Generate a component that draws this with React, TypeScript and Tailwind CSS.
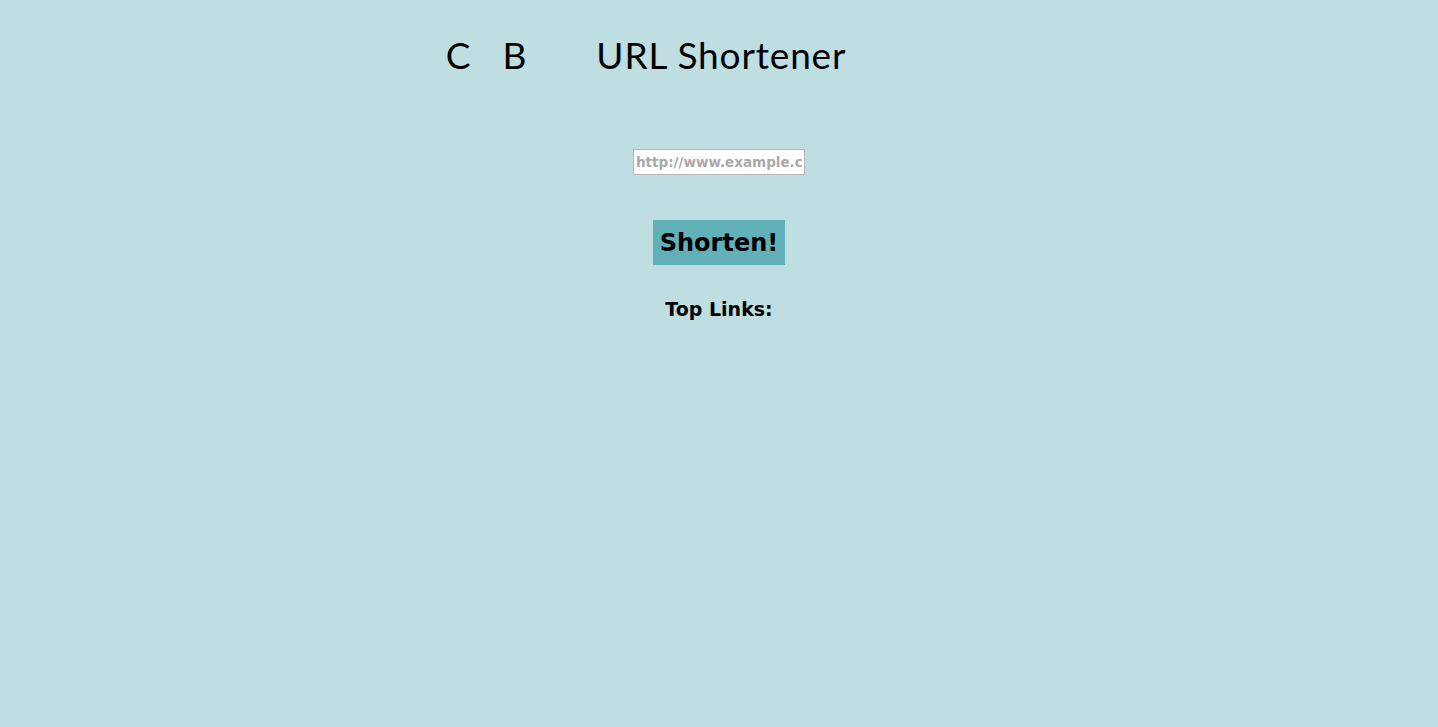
import React from "react";

export default function App() {
  return (
    <div className="min-h-[727px] w-full bg-[#bfdee2] text-black" style={{ fontFamily: "'DejaVu Sans', 'Noto Sans', sans-serif" }}>
      <div className="flex justify-center pt-[30px] pr-[146px]">
        <h1
          className="flex items-baseline text-[37px] font-normal leading-[50px]"
          style={{ fontFamily: "Lato, 'Noto Sans', sans-serif" }}
        >
          <span>C</span>
          <span className="ml-[32px]">B</span>
          <span className="ml-[70px] tracking-[0.85px]">URL Shortener</span>
        </h1>
      </div>
      <div className="flex flex-col items-center">
        <input
          type="text"
          placeholder="http://www.example.com"
          className="mt-[69px] h-[26px] w-[172px] border border-[#b5b5b5] bg-white px-[2px] text-[13.5px] font-bold text-[#555] placeholder:text-[#a9a9a9] outline-none"
          style={{ fontFamily: "'DejaVu Sans', sans-serif" }}
        />
        <button
          className="mt-[45px] h-[45px] w-[132px] bg-[#62b0b8] text-[24px] font-bold text-black"
          style={{ fontFamily: "'DejaVu Sans', sans-serif" }}
        >
          Shorten!
        </button>
        <h3 className="mt-[33px] text-[19px] font-bold leading-[22px]">Top Links:</h3>
      </div>
    </div>
  );
}
